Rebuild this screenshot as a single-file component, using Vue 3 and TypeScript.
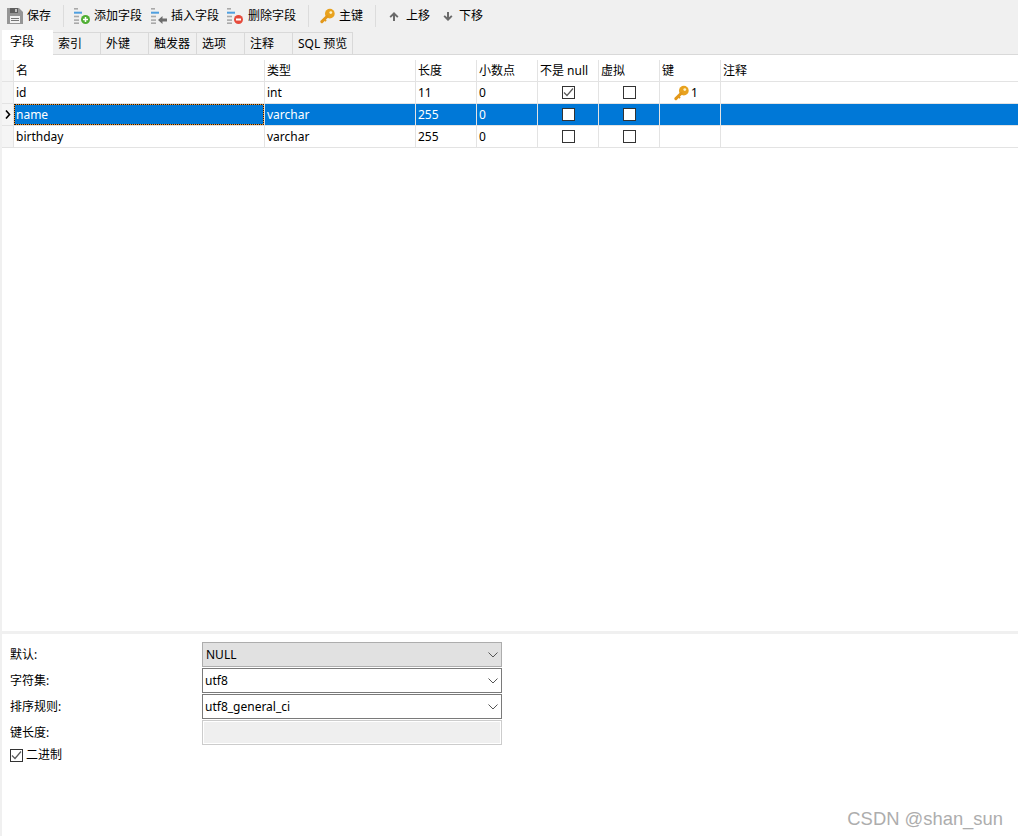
<script setup lang="ts">
interface Row { name: string; type: string; len: string; dec: string; notNull: boolean; virt: boolean; key: string; selected: boolean }
const tabs: string[] = ['字段', '索引', '外键', '触发器', '选项', '注释', 'SQL 预览']
const heads: string[] = ['名', '类型', '长度', '小数点', '不是 null', '虚拟', '键', '注释']
const rows: Row[] = [
  { name: 'id', type: 'int', len: '11', dec: '0', notNull: true, virt: false, key: '1', selected: false },
  { name: 'name', type: 'varchar', len: '255', dec: '0', notNull: false, virt: false, key: '', selected: true },
  { name: 'birthday', type: 'varchar', len: '255', dec: '0', notNull: false, virt: false, key: '', selected: false },
]
const selects = [
  { label: '默认:', value: 'NULL', cls: 'grey' },
  { label: '字符集:', value: 'utf8', cls: '' },
  { label: '排序规则:', value: 'utf8_general_ci', cls: '' },
]
</script>

<template>
  <div class="app">
    <div class="toolbar">
      <button class="tool save">
        <svg width="16" height="16" viewBox="0 0 16 16"><path d="M0 0h12l4 4v12H0z" fill="#959595"/><rect x="3" y="0" width="8" height="5" fill="#5f5f5f"/><rect x="8" y="1" width="2" height="3" fill="#c4c4c4"/><rect x="3" y="8" width="10" height="7" fill="#f2f2f2"/><rect x="4" y="10" width="8" height="1" fill="#777"/><rect x="4" y="12" width="8" height="1" fill="#777"/></svg>
        <span>保存</span>
      </button>
      <i class="sep s1"></i>
      <button class="tool add">
        <svg width="16" height="16" viewBox="0 0 16 16"><rect width="4" height="1.600" x="0" y="0" fill="#a9a9a9"/><rect width="8" height="2" x="0" y="3.700" fill="#4f9fdf"/><rect width="5" height="1.600" x="0" y="7.700" fill="#a9a9a9"/><rect width="5" height="1.600" x="0" y="11.300" fill="#a9a9a9"/><rect width="5" height="1.600" x="0" y="14.400" fill="#a9a9a9"/><circle cx="11.500" cy="11.500" r="4.500" fill="#4fae33"/><path d="M9 11.500h5M11.500 9v5" stroke="#fff" stroke-width="1.500"/></svg>
        <span>添加字段</span>
      </button>
      <button class="tool ins">
        <svg width="16" height="16" viewBox="0 0 16 16"><rect width="4" height="1.600" x="0" y="0" fill="#a9a9a9"/><rect width="8" height="2" x="0" y="3.700" fill="#4f9fdf"/><rect width="5" height="1.600" x="0" y="7.700" fill="#a9a9a9"/><rect width="5" height="1.600" x="0" y="11.300" fill="#a9a9a9"/><rect width="5" height="1.600" x="0" y="14.400" fill="#a9a9a9"/><path d="M7 12l4.500-4v2.500H16v3h-4.500V16z" fill="#6d6d6d"/></svg>
        <span>插入字段</span>
      </button>
      <button class="tool del">
        <svg width="16" height="16" viewBox="0 0 16 16"><rect width="4" height="1.600" x="0" y="0" fill="#a9a9a9"/><rect width="8" height="2" x="0" y="3.700" fill="#4f9fdf"/><rect width="5" height="1.600" x="0" y="7.700" fill="#a9a9a9"/><rect width="5" height="1.600" x="0" y="11.300" fill="#a9a9a9"/><rect width="5" height="1.600" x="0" y="14.400" fill="#a9a9a9"/><circle cx="11.500" cy="11.500" r="4.500" fill="#e64b3c"/><rect x="9" y="10.500" width="5" height="2" fill="#fff"/></svg>
        <span>删除字段</span>
      </button>
      <i class="sep s2"></i>
      <button class="tool key">
        <svg width="15" height="16" viewBox="0 0 16 16"><circle cx="10.500" cy="5.500" r="5.200" fill="#e8a21f"/><path d="M7.500 8.500L2 14" stroke="#e2981a" stroke-width="3.200" stroke-linecap="round"/><path d="M5 12l1.500 1.500" stroke="#e2981a" stroke-width="1.800"/><circle cx="11.500" cy="4.300" r="1.500" fill="#fff3c4"/></svg>
        <span>主键</span>
      </button>
      <i class="sep s3"></i>
      <button class="tool up">
        <svg width="12" height="12" viewBox="0 0 12 12"><path d="M6 2l4.500 4.500-1.300 1.300L7 5.800V11H5V5.800L2.800 7.800 1.500 6.500z" fill="#6a6a6a"/></svg>
        <span>上移</span>
      </button>
      <button class="tool down">
        <svg width="12" height="12" viewBox="0 0 12 12"><path d="M6 11L1.500 6.500l1.300-1.300L5 7.200V2h2v5.200l2.200-2 1.300 1.300z" fill="#6a6a6a"/></svg>
        <span>下移</span>
      </button>
    </div>

    <div class="tabs">
      <div v-for="(t, i) in tabs" :key="t" class="tab" :class="{ active: i === 0, sql: i === 6 }">{{ t }}</div>
    </div>

    <div class="body">
      <div class="grid">
        <div class="gridrow head">
          <div class="gutter"></div>
          <div v-for="h in heads" :key="h" class="cell">{{ h }}</div>
        </div>
        <div v-for="r in rows" :key="r.name" class="gridrow" :class="{ selected: r.selected }">
          <div class="gutter">
            <svg v-if="r.selected" width="6" height="9" viewBox="0 0 6 9"><path d="M1 .5l3.500 4-3.500 4" fill="none" stroke="#000" stroke-width="1.600"/></svg>
          </div>
          <div class="cell namecell"><span>{{ r.name }}</span></div>
          <div class="cell">{{ r.type }}</div>
          <div class="cell">{{ r.len }}</div>
          <div class="cell">{{ r.dec }}</div>
          <div class="cell center">
            <span class="check">
              <svg v-if="r.notNull" width="11" height="11" viewBox="0 0 11 11"><path d="M1 5.500l3 3 6-7" fill="none" stroke="#5a5a5a" stroke-width="1.200"/></svg>
            </span>
          </div>
          <div class="cell center"><span class="check"></span></div>
          <div class="cell keycell">
            <template v-if="r.key">
              <svg width="15" height="16" viewBox="0 0 16 16"><circle cx="10.500" cy="5.500" r="5.200" fill="#e8a21f"/><path d="M7.500 8.500L2 14" stroke="#e2981a" stroke-width="3.200" stroke-linecap="round"/><path d="M5 12l1.500 1.500" stroke="#e2981a" stroke-width="1.800"/><circle cx="11.500" cy="4.300" r="1.500" fill="#fff3c4"/></svg>
              <span>{{ r.key }}</span>
            </template>
          </div>
          <div class="cell"></div>
        </div>
      </div>
    </div>

    <div class="panel">
      <div v-for="s in selects" :key="s.label" class="formrow">
        <label>{{ s.label }}</label>
        <div class="select" :class="s.cls">
          <span>{{ s.value }}</span>
          <svg width="10" height="6" viewBox="0 0 10 6"><path d="M.5.500L5 5 9.500.5" fill="none" stroke="#555" stroke-width="1"/></svg>
        </div>
      </div>
      <div class="formrow">
        <label>键长度:</label>
        <div class="textbox"></div>
      </div>
      <div class="binary">
        <span class="check">
          <svg width="11" height="11" viewBox="0 0 11 11"><path d="M1 5.500l3 3 6-7" fill="none" stroke="#5a5a5a" stroke-width="1.200"/></svg>
        </span>
        <span>二进制</span>
      </div>
      <div class="mark">CSDN @shan_sun</div>
    </div>
  </div>
</template>

<style>
html, body { margin: 0; background: #fff; }
</style>

<style scoped>
.app {
  width: 1018px;
  height: 836px;
  display: flex;
  flex-direction: column;
  background: #fff;
  overflow: hidden;
  font: 12px/16px "Noto Sans", "Noto Sans CJK SC", sans-serif;
  color: #000;
  border-left: 2px solid #f0f0f0;
  box-sizing: border-box;
}
.toolbar {
  height: 30px;
  box-sizing: border-box;
  margin-left: -2px;
  padding: 2px 0 0 7px;
  display: flex;
  align-items: center;
  background: #f0f0f0;
}
.tool {
  all: unset;
  display: flex;
  align-items: center;
  gap: 4px;
  font-size: 12px;
  line-height: 16px;
  white-space: nowrap;
}
.tool span { width: 48px; }
.save span, .key span, .up span, .down span { width: 24px; }
.sep { display: block; width: 1px; height: 22px; background: #dcdcdc; }
.s1 { margin: 0 10px 0 12px; }
.s2 { margin: 0 11px 0 12px; }
.s3 { margin: 0 12px 0 12px; }
.ins { margin-left: 9px; }
.del { margin-left: 8px; gap: 5px; }
.up { gap: 6px; }
.down { margin-left: 12px; gap: 5px; }
.tabs {
  height: 25px;
  box-sizing: border-box;
  margin-left: -2px;
  padding: 2px 0 0 2px;
  display: flex;
  background: #f0f0f0;
  border-bottom: 1px solid #d9d9d9;
}
.tab {
  width: 48px;
  height: 22px;
  box-sizing: border-box;
  padding: 3px 0 0 5px;
  background: #f0f0f0;
  border: 1px solid #d9d9d9;
  border-left: 0;
  border-bottom: 0;
  white-space: nowrap;
}
.tab.active {
  width: 51px;
  height: 25px;
  margin-top: -2px;
  padding: 3px 0 0 8px;
  background: #fff;
  border-color: #fff;
}
.tab.sql { width: 60px; }
.body { flex: 1; min-height: 0; padding-top: 5px; }
.grid { display: flex; flex-direction: column; }
.gridrow {
  display: grid;
  grid-template-columns: 12px 251px 151px 61px 61px 61px 61px 61px 1fr;
  height: 22px;
  box-sizing: border-box;
  border-bottom: 1px solid #e3e3e3;
}
.gutter {
  display: flex;
  align-items: center;
  justify-content: center;
  background: #f5f5f5;
  border-right: 1px solid #e3e3e3;
  box-sizing: border-box;
}
.cell {
  box-sizing: border-box;
  padding: 3px 2px 0;
  border-right: 1px solid #e3e3e3;
  white-space: nowrap;
  overflow: hidden;
}
.cell:last-child { border-right: 0; }
.center { display: flex; align-items: center; justify-content: center; padding: 0; }
.selected .cell { background: #0078d7; color: #fff; }
.namecell { padding: 0; }
.namecell span { display: block; height: 100%; box-sizing: border-box; }
.selected .namecell span {
  padding: 2px 1px 0;
  border: 1px solid #f09020;
  outline: 1px dotted #1a1a1a;
  outline-offset: -1px;
}
.gridrow:not(.selected) .namecell span { padding: 3px 2px 0; }
.check {
  width: 13px;
  height: 13px;
  box-sizing: border-box;
  display: flex;
  align-items: center;
  justify-content: center;
  background: #fff;
  border: 1px solid #333;
  flex: none;
}
.keycell { display: flex; align-items: center; padding: 0 0 0 14px; gap: 2px; }
.panel {
  position: relative;
  height: 205px;
  box-sizing: border-box;
  padding-top: 8px;
  border-top: 3px solid #f0f0f0;
}
.formrow {
  display: flex;
  align-items: center;
  height: 25px;
  margin-bottom: 1px;
}
.formrow label { width: 192px; margin-left: 8px; }
.select {
  width: 300px;
  height: 25px;
  box-sizing: border-box;
  display: flex;
  align-items: center;
  justify-content: space-between;
  padding: 0 3px 0 2px;
  background: #fff;
  border: 1px solid #7a7a7a;
}
.select.grey { background: #e1e1e1; border-color: #adadad; padding-left: 3px; }
.textbox {
  width: 300px;
  height: 25px;
  box-sizing: border-box;
  background: #efefef;
  border: 1px solid #ccc;
  box-shadow: inset 0 0 0 1px #fff;
}
.binary {
  display: flex;
  align-items: center;
  gap: 3px;
  margin: 2px 0 0 8px;
}
.mark {
  position: absolute;
  right: 15px;
  bottom: 6px;
  font: 18.4px/22px "Liberation Sans", sans-serif;
  color: #adadad;
  white-space: nowrap;
}
</style>
